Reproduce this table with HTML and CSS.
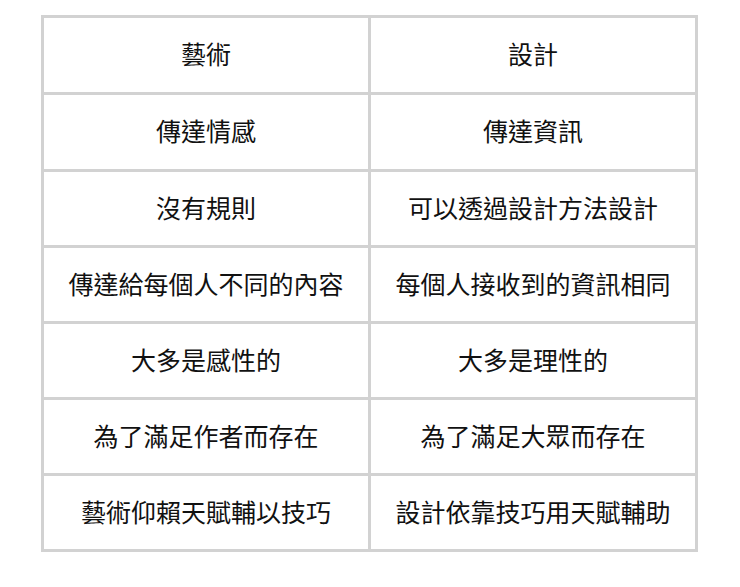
FILE: index.html
```html
<!DOCTYPE html>
<html lang="zh-Hant">
<head>
<meta charset="utf-8">
<link rel="stylesheet" href="styles.css">
</head>
<body>
<div class="grid">
  <div class="cell">藝術</div><div class="cell">設計</div>
  <div class="cell">傳達情感</div><div class="cell">傳達資訊</div>
  <div class="cell">沒有規則</div><div class="cell">可以透過設計方法設計</div>
  <div class="cell">傳達給每個人不同的內容</div><div class="cell">每個人接收到的資訊相同</div>
  <div class="cell">大多是感性的</div><div class="cell">大多是理性的</div>
  <div class="cell">為了滿足作者而存在</div><div class="cell">為了滿足大眾而存在</div>
  <div class="cell">藝術仰賴天賦輔以技巧</div><div class="cell">設計依靠技巧用天賦輔助</div>
</div>
</body>
</html>
```
FILE: styles.css
```css
html, body {
  margin: 0;
  padding: 0;
  background: #ffffff;
}
body {
  padding: 15px 0 0 41px;
  font-family: "Noto Sans CJK TC", "Noto Sans", sans-serif;
}
.grid {
  display: grid;
  width: 657px;
  box-sizing: border-box;
  grid-template-columns: 324px 324px;
  grid-template-rows: 74px 74px 73px 73px 73px 73px 73px;
  gap: 3px;
  padding: 3px;
  background: #d2d2d2;
}
.cell {
  background: #ffffff;
  display: flex;
  align-items: center;
  justify-content: center;
  box-sizing: border-box;
  padding-bottom: 3px;
  font-size: 25px;
  color: #111111;
  line-height: 1;
}
```
